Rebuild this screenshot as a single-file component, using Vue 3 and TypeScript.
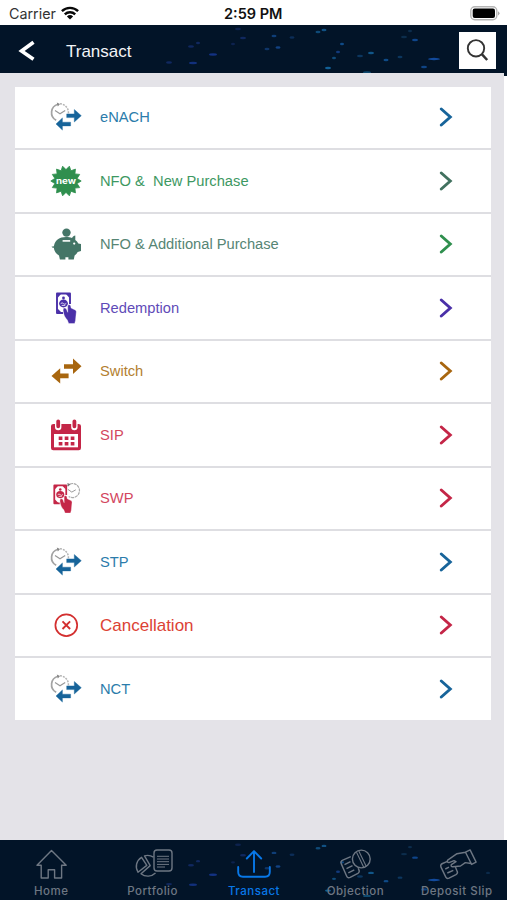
<script setup lang="ts">
type IconName = 'clock' | 'new' | 'piggy' | 'redeem' | 'switch' | 'calendar' | 'swp' | 'cancel'

interface MenuItem {
  label: string
  icon: IconName
  color: string
  iconColor: string
  arrow: string
  large?: boolean
}

const items: MenuItem[] = [
  { label: 'eNACH', icon: 'clock', color: '#2b7cab', iconColor: '#17649a', arrow: '#17649a' },
  { label: 'NFO &  New Purchase', icon: 'new', color: '#3d9862', iconColor: '#2f8f4e', arrow: '#41715f' },
  { label: 'NFO & Additional Purchase', icon: 'piggy', color: '#568574', iconColor: '#447567', arrow: '#2f8f4e' },
  { label: 'Redemption', icon: 'redeem', color: '#5f4bb8', iconColor: '#4a30a8', arrow: '#4a30a8' },
  { label: 'Switch', icon: 'switch', color: '#b3802f', iconColor: '#a8660f', arrow: '#a8660f' },
  { label: 'SIP', icon: 'calendar', color: '#d3475f', iconColor: '#c42647', arrow: '#c42647' },
  { label: 'SWP', icon: 'swp', color: '#d3475f', iconColor: '#c42647', arrow: '#c42647' },
  { label: 'STP', icon: 'clock', color: '#2b7cab', iconColor: '#17649a', arrow: '#17649a' },
  { label: 'Cancellation', icon: 'cancel', color: '#dc4234', iconColor: '#d32f2f', arrow: '#c42647', large: true },
  { label: 'NCT', icon: 'clock', color: '#2b7cab', iconColor: '#17649a', arrow: '#17649a' },
]

const tabs: string[] = ['Home', 'Portfolio', 'Transact', 'Objection', 'Deposit Slip']
const active = 'Transact'

// x, y, half width, colour of each fleck in the navy texture
const flecks: [number, number, number, string][] = [
  [169, 37.5, 3, '#10285f'], [193, 38, 4, '#12307c'], [213, 29.5, 4, '#133283'], [191, 21.5, 3, '#10285f'],
  [198, 18, 2, '#10285f'], [238, 4, 3, '#0d224e'], [233, 19, 2, '#0d224e'], [243, 13, 3, '#10285f'],
  [274, 11, 2.5, '#0f3e78'], [292, 12.5, 2.5, '#0c2d58'], [267, 24, 2.5, '#0f3568'], [278, 22.5, 2.5, '#124283'],
  [318, 7, 2.5, '#0f4a78'], [324, 5, 2.5, '#115184'], [342, 19, 2, '#0f4a86'], [338, 27, 2, '#123a7c'],
  [334, 33, 2, '#0f4a78'], [328, 43, 3, '#126096'], [360, 31, 3, '#0c365e'], [371, 28, 3, '#115688'],
  [386, 35, 2.5, '#0f4a86'], [400, 32, 2.5, '#0c365e'], [404, 12, 3, '#0c2d4c'], [415, 15, 3, '#0f458a'],
  [410, 6, 2, '#0c2d4c'], [434, 34, 6, '#124a9c'], [424, 42, 3, '#0f4484'], [488, 28, 2, '#0b2a4a'],
  [367, 47.5, 4, '#0f4a70'],
]

const badge: string = Array.from({ length: 28 }, (_, i) => {
  const r = i % 2 === 0 ? 15.2 : 11.4
  const a = (i * Math.PI) / 14
  return `${(18 + r * Math.cos(a)).toFixed(2)},${(18 + r * Math.sin(a)).toFixed(2)}`
}).join(' ')
</script>

<template>
  <main class="screen">
    <div class="status">
      <span class="carrier">Carrier</span>
      <svg class="wifi" viewBox="0 0 18 14" width="18" height="14">
        <g fill="none" stroke="#080808" stroke-width="2.4">
          <path d="M.9 5.2a11.6 11.6 0 0 1 16.2 0" />
          <path d="M3.8 8.4a7.5 7.5 0 0 1 10.4 0" />
        </g>
        <path d="M5.9 10.5a4.5 4.5 0 0 1 6.2 0L9 13.6z" fill="#080808" />
      </svg>
      <span class="time">2:59 PM</span>
      <svg class="battery" viewBox="0 0 30 15" width="30" height="15">
        <rect x=".8" y=".8" width="26" height="13" rx="4" fill="#fff" stroke="#b5b5b5" stroke-width="1.4" />
        <rect x="2.7" y="2.6" width="22.3" height="9.4" rx="2" fill="#000" />
        <path d="M28 5.2q1.5.8 1.5 2.1T28 9.4z" fill="#aaa" />
      </svg>
    </div>

    <header class="bar">
      <svg class="texture" viewBox="0 0 507 51" preserveAspectRatio="none">
        <ellipse v-for="(f, i) in flecks" :key="i" :cx="f[0]" :cy="f[1]" :rx="f[2]" ry="1.2" :fill="f[3]" />
      </svg>
      <svg class="back" viewBox="0 0 18 22" width="18" height="22">
        <path d="M15.5 2.2 3.5 11l12 8.3" fill="none" stroke="#fff" stroke-width="3.6" />
      </svg>
      <h1>Transact</h1>
      <button class="search" aria-label="Search">
        <svg viewBox="0 0 37 37" width="37" height="37" fill="none" stroke="#333">
          <circle cx="17" cy="16.3" r="8.2" stroke-width="1.9" />
          <path d="m22.8 22.2 5.4 5.8" stroke-width="2.5" />
        </svg>
      </button>
    </header>

    <section class="content">
      <ul class="list">
        <li v-for="item in items" :key="item.label" class="row">
          <svg class="icon" viewBox="0 0 36 36" width="36" height="36" :color="item.iconColor">
            <g v-if="item.icon === 'clock'">
              <path d="M8.2 21.3A8.7 8.7 0 0 1 10 5.2" fill="none" stroke="#a3a3a3" stroke-width="1.7" />
              <path d="m8.8 3.4 3.2 1.5-2.2 2.6z" fill="#858585" />
              <path d="M12 4.8a8.7 8.7 0 0 1 7.7 12.2" fill="none" stroke="#b5b5b5" stroke-width="1.5" stroke-dasharray="2 1" />
              <path d="m7 11.5 5 3.2 5.2-3.2" fill="none" stroke="#999" stroke-width="1.2" />
              <path d="M18.7 14.9h7.6v-4.4l7 6.2-7 6.3v-4.4h-7.6zM22.6 23.2h-8.2v-4.3L8 25l6.4 6.1v-4.2h8.2z" fill="currentColor" stroke="currentColor" stroke-width=".4" />
            </g>
            <g v-else-if="item.icon === 'new'" fill="currentColor">
              <polygon :points="badge" stroke="currentColor" stroke-width=".8" stroke-linejoin="round" />
              <text x="18" y="20.7" class="new" textLength="20" lengthAdjust="spacingAndGlyphs">new</text>
            </g>
            <g v-else-if="item.icon === 'piggy'" fill="currentColor">
              <circle cx="18.5" cy="6.6" r="4.2" />
              <path d="M3.6 20.4c1.3.4 2 .1 2.4-.7C7 14.200 11.500 11 18 11c2.600 0 4.300.3 6 .9.800-1.200 1.900-2.100 3.300-2.400v4.500c1.300 1 2.300 2.100 3 3.600l2.700.5v7l-3.300 1c-.8 1.500-1.800 2.600-3.100 3.500l-.8 4h-5.400v-2.400h-3v2.400h-5.500l-.9-4.100C8 27.600 6.100 25 5.800 21.700c-1.100.1-1.900-.4-2.200-1.300z" />
              <path d="M14.600 14.900h7.600" stroke="#fff" stroke-width="1.6" />
              <circle cx="26.200" cy="17.600" r="1.100" fill="#fff" />
            </g>
            <g v-else-if="item.icon === 'redeem' || item.icon === 'swp'" :transform="item.icon === 'swp' ? 'translate(-2 2.200) scale(.92)' : undefined">
              <path d="M22 14V3.500H9V23h6" fill="none" stroke="currentColor" stroke-width="1.900" stroke-linejoin="round" />
              <path d="M9.500 4h3.500l-3.500 4zM21.500 4H18l3.500 4zM9.500 18.500l4 4h-4z" fill="currentColor" />
              <ellipse cx="15.500" cy="13.500" rx="4.400" ry="3.900" fill="currentColor" />
              <circle cx="15.500" cy="8" r="1.400" fill="currentColor" />
              <path d="M12.700 13.600q1.500-1.500 2.800 0t2.800-.2M13.700 15.400h3.500" fill="none" stroke="#fff" stroke-width=".8" />
              <path d="M16.200 18.100c1.200-.4 2 .4 2.500 1.600l1 2.600v-6.500c0-1.500 2.700-1.600 3 0l.4 2.200 4.100 1.900c.9.500 1.200 1.200 1.100 2.200l-.8 8.500-.8 3h-6l-1.400-3.600c-2.300-2.300-3.900-5.200-4.200-9.700 0-1 .3-1.900 1.100-2.200z" fill="currentColor" stroke="#fff" stroke-width=".4" />
            </g>
            <g v-else-if="item.icon === 'switch'" fill="currentColor">
              <path d="M16 11.300h9V5.600l8.500 7.700-8.500 7.700v-5.300h-9zM20.600 20.600h-8.400v-5.300L3.500 23l8.700 7.600v-5.400h8.400z" />
            </g>
            <g v-else-if="item.icon === 'calendar'">
              <path d="M3 9q0-2 2.500-2h25Q33 7 33 9v22q0 2.300-2.300 2.300H5.300Q3 33.300 3 31z" fill="currentColor" />
              <rect x="6" y="17" width="24" height="13.300" fill="#fff" />
              <path d="M10.200 5v5M26.400 5v5" stroke="#fff" stroke-width="6.400" stroke-linecap="round" />
              <path d="M10.200 4.300v5M26.400 4.300v5" stroke="currentColor" stroke-width="3.800" stroke-linecap="round" />
              <path d="M10.700 21.200h15.800M10.700 26.800h15.800" stroke="currentColor" stroke-width="3.600" stroke-dasharray="3.700 2.300" />
            </g>
            <g v-else fill="none" stroke="currentColor">
              <circle cx="18.300" cy="18.200" r="10.900" stroke-width="1.700" />
              <path d="m14.500 14.400 7.600 7.600m0-7.600-7.600 7.600" stroke-width="1.900" />
            </g>
            <g v-if="item.icon === 'swp'" fill="none">
              <path d="M19 6.200a7 7 0 1 1 1.700 10.200" stroke="#aaa" stroke-width="1.200" stroke-dasharray="3 .7" />
              <path d="m19.800 9.300 4 2.800 4-2.300" stroke="#999" />
              <path d="m19.300 3.100 3.300 1.100-2.500 2.300z" fill="#777" />
            </g>
          </svg>
          <span class="label" :class="{ large: item.large }" :style="{ color: item.color }">{{ item.label }}</span>
          <svg class="arrow" viewBox="0 0 14 20" width="14" height="20">
            <path d="m2.300 2 9 8-9 8" fill="none" :stroke="item.arrow" stroke-width="2.900" stroke-linecap="round" />
          </svg>
        </li>
      </ul>
    </section>

    <nav class="tabs">
      <svg class="texture" viewBox="0 0 507 51" preserveAspectRatio="none">
        <ellipse v-for="(f, i) in flecks" :key="i" :cx="f[0]" :cy="f[1]" :rx="f[2]" ry="1" :fill="f[3]" />
      </svg>
      <a v-for="tab in tabs" :key="tab" class="tab" :class="{ active: tab === active }">
        <svg viewBox="0 0 40 34" width="40" height="34" fill="none" stroke="currentColor" stroke-width="1.400" stroke-linejoin="round">
          <path v-if="tab === 'Home'" d="M20.500 3.500 6 18.300h4.200V31h7v-8.300h6.400V31h7V18.300h4.600z" />
          <g v-else-if="tab === 'Portfolio'">
            <rect x="21" y="3" width="18" height="21" rx="3" />
            <path d="M24 9.300h12M24 12h12M24 14.700h12M24 17.400h12M24 20h8" stroke-width="1" />
            <path d="M8.600 10.300 13.800 18.400 5 25.200A10.600 10.600 0 0 1 8.600 10.300z" />
            <path d="M20.500 10.200A11 11 0 0 0 11.500 8.800L17.200 18.600 8 26.700A11 11 0 0 0 22.500 26" />
          </g>
          <g v-else-if="tab === 'Transact'" stroke-width="1.900">
            <path d="M4.200 20v5q0 4.700 4.700 4.700h22.200q4.700 0 4.700-4.700v-5M20 25V4.200M12.800 11.500 20 4.200l7.200 7.300" stroke-linecap="round" />
          </g>
          <g v-else-if="tab === 'Objection'">
            <circle cx="26.300" cy="12" r="8.900" />
            <path d="m23.800 4 7.500 15.500M21.500 5.300l7.200 15" stroke-width="1.100" />
            <path d="m15.800 9.700-8 3.500q-2.700 1.200-1.500 3.700L11.600 29q1 2.500 3.600 1.300l7.700-4q2-1.100 1.100-3.200l-.8-1.800" />
            <path d="m9.500 17.600 6-3M11.500 21.600l6-3M13.300 25.800l6-3" />
          </g>
          <g v-else>
            <path d="m28.500 5.200 4.600-2.300 6 12.200-4.500 2.300zM28.600 5.300 20 6.700l-9.300 6.400q-1.200 2.400 1.300 2.500l5-2 2 1.100-4.700 3q-.7 2.200 1.700 2l7.500-.7 4.800-3.400 5.700.9" />
            <path d="m10.500 14.300-5 2.200q-2.600 1.200-1.500 3.600l4.800 10q1 2 3.200 1.100l7-3.600q2.200-1.200 1.200-3.200l-1.800-4.300M8.300 22l3.700-1.800M10.300 26l6-2.700" />
          </g>
        </svg>
        <span>{{ tab }}</span>
      </a>
    </nav>
  </main>
</template>

<style>
body {
  background: #fff;
}
</style>

<style scoped>
.screen {
  display: flex;
  flex-direction: column;
  width: 507px;
  height: 900px;
  overflow: hidden;
  background: #fff;
  font-family: "Liberation Sans", Arial, sans-serif;
}

.status {
  display: grid;
  grid-template-columns: 52px 163px 1fr 30px;
  align-items: center;
  box-sizing: border-box;
  height: 25px;
  padding: 2px 7px 0 9px;
  font-family: Inter, sans-serif;
  color: #111;
}

.carrier {
  font-size: 14.3px;
  color: #333;
}

.wifi {
  margin-bottom: 1px;
}

.time {
  font-size: 14.5px;
  font-weight: 600;
  white-space: nowrap;
}

.bar,
.tabs {
  position: relative;
  flex: none;
  background: #021428;
}

.bar {
  display: flex;
  align-items: center;
  box-sizing: border-box;
  height: 51px;
  padding: 0 11px 0 18px;
}

.texture {
  position: absolute;
  inset: 0;
  width: 100%;
  height: 100%;
}

.back,
h1,
.search {
  position: relative;
}

h1 {
  flex: 1;
  margin: 0 0 0 30px;
  padding-top: 2px;
  font-size: 17px;
  font-weight: 400;
  color: #f2f4f7;
}

.search {
  display: block;
  width: 37px;
  height: 37px;
  padding: 0;
  border: 0;
  background: #fff;
}

.search svg {
  display: block;
}

.content {
  position: relative;
  flex: 1;
  box-sizing: border-box;
  width: 504px;
  margin-top: -3px;
  padding: 13.5px 13px 0 14.5px;
  background: #e4e3e8;
}

.list {
  display: flex;
  flex-direction: column;
  gap: 2px;
  margin: 0;
  padding: 0;
  list-style: none;
  background: #dedee2;
}

.row {
  display: flex;
  align-items: center;
  box-sizing: border-box;
  height: 61.5px;
  padding: 0 38px 0 33.5px;
  background: #fff;
}

.label {
  flex: 1;
  margin-left: 16px;
  font-size: 14.7px;
  white-space: pre;
}

.label.large {
  padding-top: 2px;
  font-size: 17px;
}

.new {
  fill: #fff;
  font-family: Inter, sans-serif;
  font-size: 9px;
  font-weight: 700;
  text-anchor: middle;
}

.tabs {
  display: grid;
  grid-template-columns: repeat(5, 1fr);
  height: 60px;
}

.tab {
  position: relative;
  display: flex;
  flex-direction: column;
  align-items: center;
  padding: 7px 0 0 1px;
  font-family: Inter, sans-serif;
  font-size: 11.5px;
  font-weight: 500;
  line-height: 14px;
  letter-spacing: 0.5px;
  color: #6e7783;
}

.tab span {
  margin-top: 3px;
  white-space: nowrap;
}

.tab.active {
  color: #0878e8;
}
</style>
